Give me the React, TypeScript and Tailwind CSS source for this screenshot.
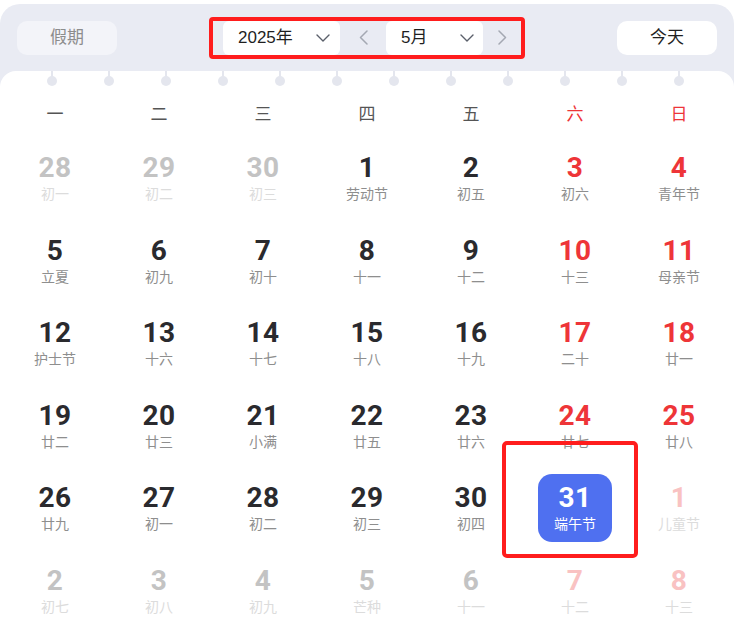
import React from "react";

type Kind = "n" | "r" | "fn" | "fr" | "sel";
type Cell = { d: number; l: string; k: Kind };

const rows: Cell[][] = [
  [
    { d: 28, l: "初一", k: "fn" },
    { d: 29, l: "初二", k: "fn" },
    { d: 30, l: "初三", k: "fn" },
    { d: 1, l: "劳动节", k: "n" },
    { d: 2, l: "初五", k: "n" },
    { d: 3, l: "初六", k: "r" },
    { d: 4, l: "青年节", k: "r" },
  ],
  [
    { d: 5, l: "立夏", k: "n" },
    { d: 6, l: "初九", k: "n" },
    { d: 7, l: "初十", k: "n" },
    { d: 8, l: "十一", k: "n" },
    { d: 9, l: "十二", k: "n" },
    { d: 10, l: "十三", k: "r" },
    { d: 11, l: "母亲节", k: "r" },
  ],
  [
    { d: 12, l: "护士节", k: "n" },
    { d: 13, l: "十六", k: "n" },
    { d: 14, l: "十七", k: "n" },
    { d: 15, l: "十八", k: "n" },
    { d: 16, l: "十九", k: "n" },
    { d: 17, l: "二十", k: "r" },
    { d: 18, l: "廿一", k: "r" },
  ],
  [
    { d: 19, l: "廿二", k: "n" },
    { d: 20, l: "廿三", k: "n" },
    { d: 21, l: "小满", k: "n" },
    { d: 22, l: "廿五", k: "n" },
    { d: 23, l: "廿六", k: "n" },
    { d: 24, l: "廿七", k: "r" },
    { d: 25, l: "廿八", k: "r" },
  ],
  [
    { d: 26, l: "廿九", k: "n" },
    { d: 27, l: "初一", k: "n" },
    { d: 28, l: "初二", k: "n" },
    { d: 29, l: "初三", k: "n" },
    { d: 30, l: "初四", k: "n" },
    { d: 31, l: "端午节", k: "sel" },
    { d: 1, l: "儿童节", k: "fr" },
  ],
  [
    { d: 2, l: "初七", k: "fn" },
    { d: 3, l: "初八", k: "fn" },
    { d: 4, l: "初九", k: "fn" },
    { d: 5, l: "芒种", k: "fn" },
    { d: 6, l: "十一", k: "fn" },
    { d: 7, l: "十二", k: "fr" },
    { d: 8, l: "十三", k: "fr" },
  ],
];

const numCls: Record<Kind, string> = {
  n: "text-[#2a2a2e]",
  r: "text-[#ee3538]",
  fn: "text-[#c3c3c3]",
  fr: "text-[#f9c2c2]",
  sel: "text-white",
};
const lunCls: Record<Kind, string> = {
  n: "text-[#8e8e8e]",
  r: "text-[#8e8e8e]",
  fn: "text-[#dcdcdc]",
  fr: "text-[#dcdcdc]",
  sel: "text-white",
};

const weekdays = ["一", "二", "三", "四", "五", "六", "日"];

function ChevronDown() {
  return (
    <svg width="14" height="8" viewBox="0 0 14 8" fill="none">
      <polyline points="1,1 7,7 13,1" stroke="#5a5f6a" strokeWidth="1.4" strokeLinecap="round" strokeLinejoin="round" />
    </svg>
  );
}

function Arrow({ dir }: { dir: "l" | "r" }) {
  return (
    <svg width="9" height="15" viewBox="0 0 9 15" fill="none">
      <polyline
        points={dir === "l" ? "8,1 1.5,7.5 8,14" : "1,1 7.5,7.5 1,14"}
        stroke="#a4a8b2"
        strokeWidth="1.5"
        strokeLinecap="round"
        strokeLinejoin="round"
      />
    </svg>
  );
}

export default function App() {
  return (
    <div
      className="relative w-[734px] h-[636px] overflow-hidden bg-white"
      style={{ fontFamily: '"Liberation Sans", "Noto Sans CJK SC", sans-serif' }}
    >
      <div className="mt-[4px] bg-[#e9ebf3] rounded-t-[20px]">
        {/* header */}
        <div className="h-[67px] flex items-center justify-between px-[17px]">
          <div className="w-[100px] h-[34px] rounded-[10px] bg-[#f3f4f9] flex items-center justify-center text-[17px] text-[#8d8d8d]">
            假期
          </div>
          <div className="flex items-center border-[4px] border-[#ff1d1d] rounded-[4px] pl-[10px]">
            <div className="w-[117px] h-[34px] rounded-[6px] bg-white flex items-center justify-between pl-[15px] pr-[10px]">
              <span className="text-[17px] text-[#1f1f1f]">2025年</span>
              <ChevronDown />
            </div>
            <div className="w-[46px] h-[34px] flex items-center justify-center">
              <Arrow dir="l" />
            </div>
            <div className="w-[97px] h-[34px] rounded-[6px] bg-white flex items-center justify-between pl-[15px] pr-[9px]">
              <span className="text-[17px] text-[#1f1f1f]">5月</span>
              <ChevronDown />
            </div>
            <div className="w-[38px] h-[34px] flex items-center justify-center">
              <Arrow dir="r" />
            </div>
          </div>
          <div className="w-[100px] h-[34px] rounded-[10px] bg-white flex items-center justify-center text-[17px] text-[#1f1f1f]">
            今天
          </div>
        </div>

        {/* card */}
        <div className="bg-white rounded-t-[16px]">
          <div className="h-[15px] flex pl-[47px] gap-[47px]">
            {Array.from({ length: 12 }).map((_, i) => (
              <div key={i} className="w-[10px] flex flex-col items-center">
                <div className="w-[2px] h-[6px] bg-[#e4e6ee]" />
                <div className="w-[10px] h-[10px] rounded-full bg-[#e4e6ee] -mt-[1px]" />
              </div>
            ))}
          </div>
          <div className="grid grid-cols-7 px-[3px] h-[54px] items-center">
            {weekdays.map((w, i) => (
              <div
                key={w}
                className={`text-center text-[17px] ${i >= 5 ? "text-[#ee3538]" : "text-[#555555]"}`}
                style={{ fontFamily: '"Noto Sans CJK SC", sans-serif' }}
              >
                {w}
              </div>
            ))}
          </div>
          <div className="grid grid-cols-7 px-[3px] auto-rows-[82.6px]">
            {rows.flat().map((c, i) => (
              <div key={i} className="flex flex-col items-center pt-[4px]">
                <div
                  className={`w-[74px] h-[68px] rounded-[14px] flex flex-col items-center pt-[9px] ${
                    c.k === "sel" ? "bg-[#4f70f0]" : ""
                  }`}
                >
                  <div
                    className={`h-[30px] leading-[30px] text-[28px] font-bold tracking-[0.5px] ${numCls[c.k]}`}
                    style={{ fontFamily: 'Roboto, "Noto Sans CJK SC", sans-serif' }}
                  >
                    {c.d}
                  </div>
                  <div
                    className={`h-[20px] leading-[20px] text-[14px] ${lunCls[c.k]}`}
                    style={{ fontFamily: '"Noto Sans CJK SC", sans-serif' }}
                  >
                    {c.l}
                  </div>
                </div>
              </div>
            ))}
          </div>
        </div>
      </div>

      {/* annotation overlay */}
      <div className="absolute left-[502px] top-[441px] w-[136px] h-[117px] border-[4px] border-[#ff1d1d] rounded-[5px] pointer-events-none" />
    </div>
  );
}
